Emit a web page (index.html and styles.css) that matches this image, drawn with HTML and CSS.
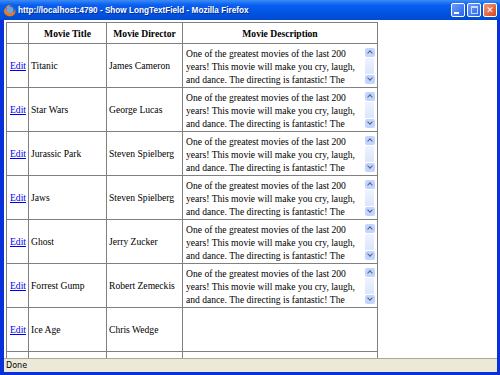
FILE: index.html
```html
<!DOCTYPE html>
<html lang="en">
<head>
    <meta charset="UTF-8">
    <title>Show LongTextField</title>
    <link rel="stylesheet" href="styles.css">
</head>
<body>

<div class="window">
    <div class="titlebar">
        <svg class="app-icon" width="13" height="13" viewBox="0 0 13 13">
            <circle cx="6.5" cy="6.5" r="6" fill="#2a5fc0"/>
            <circle cx="6.8" cy="6.2" r="3.6" fill="#6ea0e8"/>
            <path d="M1 7.5 C1.5 11.5 6 13 9 12 C12 11 13 8 12.2 5 C11.5 8.5 8.5 10 6 9.2 C3.5 8.5 2.5 6 3.2 3.5 C1.8 4.5 0.8 6 1 7.5 Z" fill="#f07a12"/>
            <path d="M3.2 3.5 C4 1.5 6 0.6 8 1 C6.5 1.5 5.5 2.5 5.2 3.8 Z" fill="#f5a623"/>
        </svg>
        <span class="title">http://localhost:4790 - Show LongTextField - Mozilla Firefox</span>
        <div class="controls">
            <span class="btn"><span class="min-glyph"></span></span>
            <span class="btn"><span class="max-glyph"></span></span>
            <span class="btn close">&#x2715;</span>
        </div>
    </div>

    <div class="content">
        <table class="grid">
            <colgroup>
                <col class="c-edit">
                <col class="c-title">
                <col class="c-director">
                <col class="c-desc">
            </colgroup>
            <thead>
                <tr>
                    <th></th>
                    <th>Movie Title</th>
                    <th>Movie Director</th>
                    <th>Movie Description</th>
                </tr>
            </thead>
            <tbody id="rows"></tbody>
        </table>
    </div>

    <div class="statusbar">Done</div>
</div>

<script>
    const peliculas = [
        ['Titanic', 'James Cameron', true],
        ['Star Wars', 'George Lucas', true],
        ['Jurassic Park', 'Steven Spielberg', true],
        ['Jaws', 'Steven Spielberg', true],
        ['Ghost', 'Jerry Zucker', true],
        ['Forrest Gump', 'Robert Zemeckis', true],
        ['Ice Age', 'Chris Wedge', false],
        ['', '', false]
    ];
    const texto = 'One of the greatest movies of the last 200 years! This movie will make you cry, laugh, and dance. The directing is fantastic! The acting is superb!';

    const tbody = document.getElementById('rows');
    peliculas.forEach(function(p) {
        const tr = document.createElement('tr');
        let desc = '';
        if (p[2]) {
            desc = '<div class="memo"><div class="memo-text">' + texto + '</div>' +
                '<div class="scroll"><span class="arrow up"></span><span class="thumb"></span><span class="arrow down"></span></div></div>';
        }
        tr.innerHTML = '<td class="edit">' + (p[0] ? '<a href="#">Edit</a>' : '') + '</td>' +
            '<td>' + p[0] + '</td>' +
            '<td>' + p[1] + '</td>' +
            '<td class="desc">' + desc + '</td>';
        tbody.appendChild(tr);
    });
</script>

</body>
</html>
```

FILE: styles.css
```css
body {
    margin: 0;
    padding: 0;
    background-color: #fff;
}
.window {
    width: 500px;
    height: 375px;
    display: flex;
    flex-direction: column;
    background-color: #0831d9;
    overflow: hidden;
}
.titlebar {
    height: 20px;
    flex: none;
    display: flex;
    align-items: center;
    padding: 0 3px 0 3px;
    background: linear-gradient(#3b8cf5 0%, #0a5ff0 25%, #0055e5 60%, #0049d0 100%);
}
.app-icon {
    flex: none;
    margin-right: 2px;
}
.title {
    font-family: "Liberation Sans", Arial, sans-serif;
    font-weight: bold;
    font-size: 8.2px;
    color: #fff;
    white-space: nowrap;
    text-shadow: 1px 1px 0 #0a2a90;
}
.controls {
    margin-left: auto;
    display: flex;
    gap: 2px;
}
.btn {
    width: 12px;
    height: 12px;
    border: 1px solid #fff;
    border-radius: 2px;
    background: linear-gradient(135deg, #6d9cf8, #2a64e8);
    display: flex;
    align-items: center;
    justify-content: center;
}
.btn.close {
    background: linear-gradient(135deg, #f09a78, #d8441c);
    color: #fff;
    font-family: "DejaVu Sans", sans-serif;
    font-weight: bold;
    font-size: 9px;
    line-height: 1;
}
.min-glyph {
    width: 5px;
    height: 2px;
    background-color: #fff;
    margin-top: 6px;
    margin-right: 3px;
}
.max-glyph {
    width: 5px;
    height: 5px;
    border: 1px solid #fff;
    border-top-width: 2px;
    opacity: 0.7;
}
.content {
    flex: 1;
    min-height: 0;
    margin: 0 3px 0 4px;
    padding: 2px 0 0 2px;
    background-color: #fff;
    overflow: hidden;
}
.grid {
    width: 371px;
    table-layout: fixed;
    border-collapse: collapse;
    font-family: "Liberation Serif", "Times New Roman", serif;
    font-size: 9.6px;
    color: #000;
}
.c-edit { width: 22px; }
.c-title { width: 78px; }
.c-director { width: 76px; }
.c-desc { width: 195px; }
.grid th,
.grid td {
    border: 1px solid #808080;
    padding: 0 2px;
    text-align: left;
    white-space: nowrap;
}
.grid th {
    height: 20px;
    text-align: center;
    font-weight: bold;
}
.grid td {
    height: 43px;
}
.grid td.edit {
    padding-left: 3px;
}
.grid a {
    color: #0000ee;
}
.grid td.desc {
    padding: 0 1px 0 3px;
    white-space: normal;
}
.memo {
    display: flex;
    height: 40px;
}
.memo-text {
    flex: 1;
    overflow: hidden;
    line-height: 13px;
    padding-top: 1px;
}
.scroll {
    width: 13px;
    display: flex;
    flex-direction: column;
    align-items: center;
    padding: 2px 0;
}
.arrow {
    width: 10px;
    height: 9px;
    background-color: #c3d5fd;
    border-radius: 2px;
    position: relative;
}
.arrow::after {
    content: "";
    position: absolute;
    left: 3px;
    width: 3px;
    height: 3px;
    border-left: 1px solid #4d6185;
    border-top: 1px solid #4d6185;
}
.arrow.up::after {
    top: 3px;
    transform: rotate(45deg);
}
.arrow.down::after {
    top: 1px;
    transform: rotate(-135deg);
}
.thumb {
    flex: 1;
    width: 9px;
    margin: 1px 0;
    background: linear-gradient(#eef3fe, #dbe6fc);
}
.statusbar {
    height: 13px;
    flex: none;
    margin: 0 3px 3px 4px;
    border-top: 1px solid #aca899;
    background-color: #ece9d8;
    font-family: Tahoma, "DejaVu Sans", sans-serif;
    font-size: 8px;
    line-height: 13px;
    padding-left: 2px;
    color: #000;
}
```
